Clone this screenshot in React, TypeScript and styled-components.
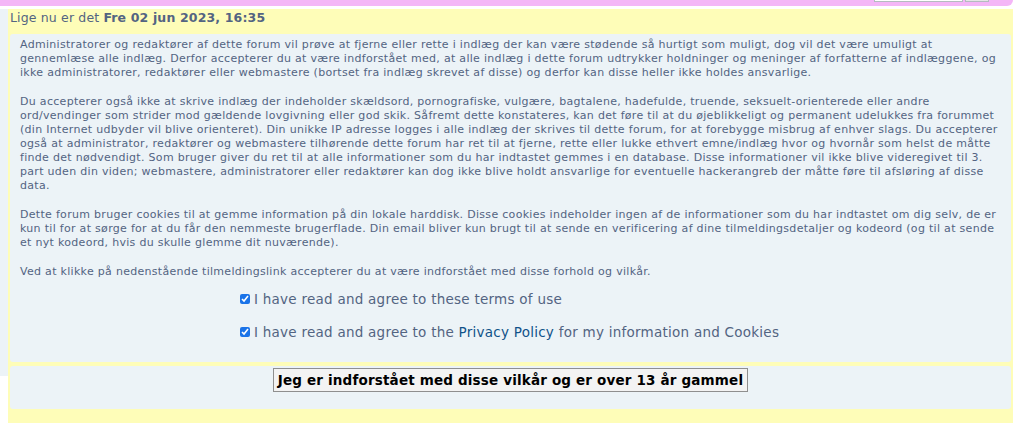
import React from 'react';
import styled, {createGlobalStyle} from 'styled-components';

const GlobalStyle = createGlobalStyle`
  body {
    margin: 0;
    background: #ffffff;
    font-family: "DejaVu Sans", Verdana, sans-serif;
    color: #536482;
  }
`;

const Header = styled.div`
  width: 1013px;
  height: 6px;
  background: #f4b6f7;
  border-bottom-right-radius: 7px;
  display: flex;
  justify-content: flex-end;
  align-items: flex-end;
  padding-right: 24px;
  box-sizing: border-box;
  gap: 2px;
`;

const SearchInput = styled.div`
  width: 87px;
  height: 2px;
  margin-bottom: 4px;
  background: #fff;
  border: 1px solid #b4bac0;
  border-top: none;
`;

const SearchButton = styled.div`
  width: 22px;
  height: 2px;
  margin-bottom: 4px;
  background: #e6e6e6;
  border: 1px solid #b4bac0;
  border-top: none;
`;

const Body = styled.div`
  display: flex;
  margin-top: 3px;
  align-items: flex-start;
`;

const SideStrip = styled.div`
  width: 8px;
  height: 367px;
  background: #ecf3f7;
`;

const Main = styled.div`
  width: 1005px;
  height: 414px;
  background: #fefdb8;
  padding: 0 2px;
  box-sizing: border-box;
`;

const Title = styled.div`
  font-size: 12.5px;
  letter-spacing: 0.15px;
  height: 25px;
  line-height: 18px;
  box-sizing: border-box;
  strong {
    font-weight: bold;
  }
`;

const Panel = styled.div<{ $compact?: boolean }>`
  background: #ecf3f7;
  border-radius: 3px;
  padding: ${p => (p.$compact ? '2px 10px' : '4px 10px')};
  height: ${p => (p.$compact ? '43px' : '328px')};
  box-sizing: border-box;
  margin-bottom: 4px;
`;

const Para = styled.p`
  margin: 0 0 15px;
  font-size: 11px;
  letter-spacing: 0.3px;
  line-height: 14px;
`;

const Line = styled.span`
  display: block;
  white-space: nowrap;
`;

const Checks = styled.div`
  padding-left: 220px;
  display: flex;
  flex-direction: column;
  gap: 17px;
  margin-top: -3px;
`;

const CheckRow = styled.label`
  display: flex;
  align-items: center;
  font-size: 13.5px;
  letter-spacing: 0.25px;
  line-height: 16px;
  gap: 4px;
  input {
    margin: 0;
    width: 10px;
    height: 10px;
    accent-color: #1a73e8;
  }
  a {
    color: #105289;
    text-decoration: none;
  }
`;

const ButtonRow = styled.div`
  display: flex;
  justify-content: center;
`;

const Submit = styled.button`
  font-family: "DejaVu Sans", Verdana, sans-serif;
  font-weight: bold;
  font-size: 13.5px;
  letter-spacing: 0.17px;
  color: #000;
  background: #f3f3f3;
  border: 1px solid #8f8f8f;
  padding: 2px 4px;
  height: 24px;
`;

const paragraphs: string[][] = [
  [
    'Administratorer og redaktører af dette forum vil prøve at fjerne eller rette i indlæg der kan være stødende så hurtigt som muligt, dog vil det være umuligt at',
    'gennemlæse alle indlæg. Derfor accepterer du at være indforstået med, at alle indlæg i dette forum udtrykker holdninger og meninger af forfatterne af indlæggene, og',
    'ikke administratorer, redaktører eller webmastere (bortset fra indlæg skrevet af disse) og derfor kan disse heller ikke holdes ansvarlige.',
  ],
  [
    'Du accepterer også ikke at skrive indlæg der indeholder skældsord, pornografiske, vulgære, bagtalene, hadefulde, truende, seksuelt-orienterede eller andre',
    'ord/vendinger som strider mod gældende lovgivning eller god skik. Såfremt dette konstateres, kan det føre til at du øjeblikkeligt og permanent udelukkes fra forummet',
    '(din Internet udbyder vil blive orienteret). Din unikke IP adresse logges i alle indlæg der skrives til dette forum, for at forebygge misbrug af enhver slags. Du accepterer',
    'også at administrator, redaktører og webmastere tilhørende dette forum har ret til at fjerne, rette eller lukke ethvert emne/indlæg hvor og hvornår som helst de måtte',
    'finde det nødvendigt. Som bruger giver du ret til at alle informationer som du har indtastet gemmes i en database. Disse informationer vil ikke blive videregivet til 3.',
    'part uden din viden; webmastere, administratorer eller redaktører kan dog ikke blive holdt ansvarlige for eventuelle hackerangreb der måtte føre til afsløring af disse',
    'data.',
  ],
  [
    'Dette forum bruger cookies til at gemme information på din lokale harddisk. Disse cookies indeholder ingen af de informationer som du har indtastet om dig selv, de er',
    'kun til for at sørge for at du får den nemmeste brugerflade. Din email bliver kun brugt til at sende en verificering af dine tilmeldingsdetaljer og kodeord (og til at sende',
    'et nyt kodeord, hvis du skulle glemme dit nuværende).',
  ],
  [
    'Ved at klikke på nedenstående tilmeldingslink accepterer du at være indforstået med disse forhold og vilkår.',
  ],
];

export default function App() {
  return (
    <>
      <GlobalStyle/>
      <Header>
        <SearchInput/>
        <SearchButton/>
      </Header>
      <Body>
        <SideStrip/>
        <Main>
          <Title>Lige nu er det <strong>Fre 02 jun 2023, 16:35</strong></Title>
          <Panel>
            {paragraphs.map((lines, i) => (
              <Para key={i}>
                {lines.map((l, j) => <Line key={j}>{l}</Line>)}
              </Para>
            ))}
            <Checks>
              <CheckRow>
                <input type="checkbox" defaultChecked/>
                I have read and agree to these terms of use
              </CheckRow>
              <CheckRow>
                <input type="checkbox" defaultChecked/>
                <span>I have read and agree to the <a href="#">Privacy Policy</a> for my information and Cookies</span>
              </CheckRow>
            </Checks>
          </Panel>
          <Panel $compact>
            <ButtonRow>
              <Submit type="button">Jeg er indforstået med disse vilkår og er over 13 år gammel</Submit>
            </ButtonRow>
          </Panel>
        </Main>
      </Body>
    </>
  );
}
